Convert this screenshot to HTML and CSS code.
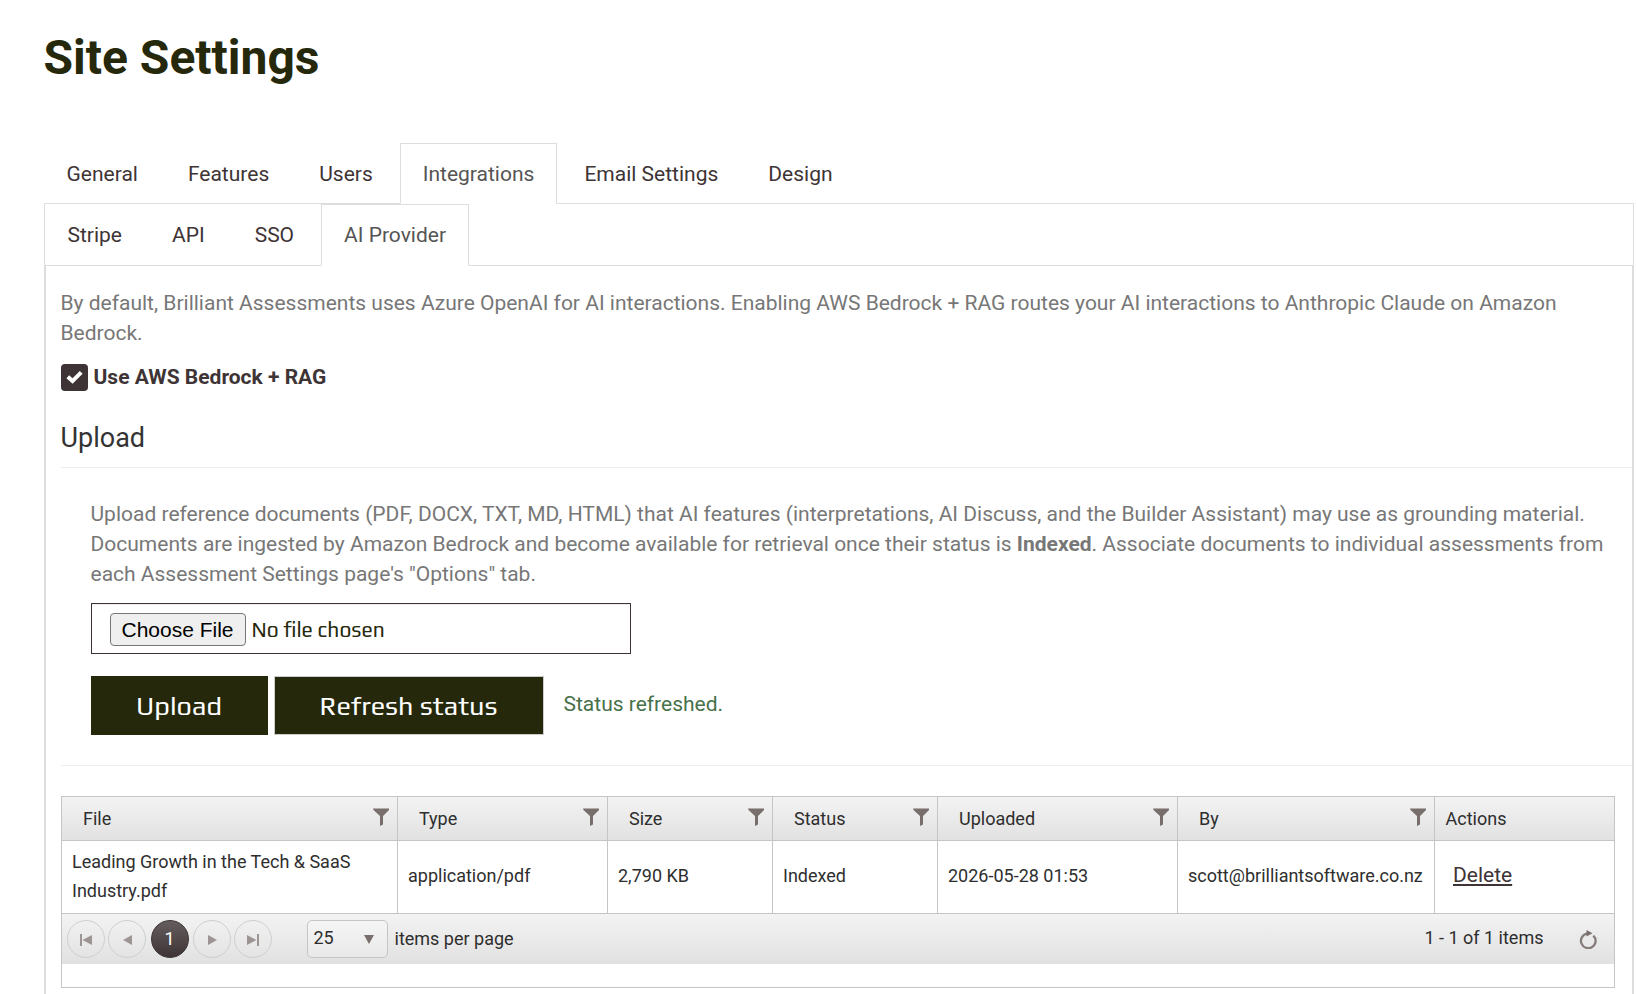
FILE: index.html
```html
<!DOCTYPE html>
<html lang="en">
<head>
    <meta charset="UTF-8">
    <meta name="viewport" content="width=device-width, initial-scale=1.0">
    <title>Site Settings</title>
    <link rel="stylesheet" href="styles.css">
</head>
<body>
    <!-- Shared icon shapes -->
    <svg class="sprite" width="0" height="0">
        <symbol id="filter" viewBox="0 0 16 18">
            <path d="M0 0.5h16v1.5L10 8v8.5l-3 1.5V8L0.5 2z"/>
        </symbol>
    </svg>

    <div class="page">
        <h1>Site Settings</h1>

        <ul class="tabs">
            <li><a>General</a></li>
            <li><a>Features</a></li>
            <li><a>Users</a></li>
            <li class="active"><a>Integrations</a></li>
            <li><a>Email Settings</a></li>
            <li><a>Design</a></li>
        </ul>

        <div class="tab-content">
            <ul class="tabs inner-tabs">
                <li><a>Stripe</a></li>
                <li><a>API</a></li>
                <li><a>SSO</a></li>
                <li class="active"><a>AI Provider</a></li>
            </ul>

            <div class="inner-content">
                <p class="help">By default, Brilliant Assessments uses Azure OpenAI for AI interactions. Enabling AWS Bedrock + RAG routes your AI interactions to Anthropic Claude on Amazon Bedrock.</p>

                <div class="check-row">
                    <span class="checkbox">
                        <svg width="17" height="14" viewBox="0 0 17 14"><path d="M1.8 6.8l4.7 4.3L15.2 2.3" fill="none" stroke="#fff" stroke-width="4"/></svg>
                    </span>
                    <label>Use AWS Bedrock + RAG</label>
                </div>

                <h3>Upload</h3>

                <div class="upload-area">
                    <p class="help">Upload reference documents (PDF, DOCX, TXT, MD, HTML) that AI features (interpretations, AI Discuss, and the Builder Assistant) may use as grounding material. Documents are ingested by Amazon Bedrock and become available for retrieval once their status is <strong>Indexed</strong>. Associate documents to individual assessments from each Assessment Settings page's "Options" tab.</p>
                    <div class="file-input">
                        <button class="choose">Choose File</button>
                        <span class="file-name">No file chosen</span>
                    </div>
                    <div class="actions">
                        <button class="btn">Upload</button>
                        <button class="btn btn-bordered">Refresh status</button>
                        <span class="status">Status refreshed.</span>
                    </div>
                </div>

                <div class="grid">
                    <table>
                        <colgroup>
                            <col class="col-file">
                            <col class="col-type">
                            <col class="col-size">
                            <col class="col-status">
                            <col class="col-uploaded">
                            <col class="col-by">
                            <col>
                        </colgroup>
                        <thead>
                            <tr>
                                <th><div class="head">File<svg class="filter"><use href="#filter"/></svg></div></th>
                                <th><div class="head">Type<svg class="filter"><use href="#filter"/></svg></div></th>
                                <th><div class="head">Size<svg class="filter"><use href="#filter"/></svg></div></th>
                                <th><div class="head">Status<svg class="filter"><use href="#filter"/></svg></div></th>
                                <th><div class="head">Uploaded<svg class="filter"><use href="#filter"/></svg></div></th>
                                <th><div class="head">By<svg class="filter"><use href="#filter"/></svg></div></th>
                                <th><div class="head plain">Actions</div></th>
                            </tr>
                        </thead>
                        <tbody>
                            <tr>
                                <td>Leading Growth in the Tech &amp; SaaS Industry.pdf</td>
                                <td>application/pdf</td>
                                <td>2,790 KB</td>
                                <td>Indexed</td>
                                <td>2026-05-28 01:53</td>
                                <td>scott@brilliantsoftware.co.nz</td>
                                <td><a class="delete">Delete</a></td>
                            </tr>
                        </tbody>
                    </table>

                    <div class="pager">
                        <span class="page-btn"><svg width="12" height="12" viewBox="0 0 12 12"><path d="M0 0h2v12H0zM12 1v10L2.5 6z"/></svg></span>
                        <span class="page-btn"><svg width="12" height="12" viewBox="0 0 12 12"><path d="M11 1v10L2 6z"/></svg></span>
                        <span class="page-btn current">1</span>
                        <span class="page-btn"><svg width="12" height="12" viewBox="0 0 12 12"><path d="M2 1v10l9-5z"/></svg></span>
                        <span class="page-btn"><svg width="12" height="12" viewBox="0 0 12 12"><path d="M10 0h2v12h-2zM0 1v10l9.5-5z"/></svg></span>
                        <span class="page-size">25<svg width="10" height="9" viewBox="0 0 10 9"><path d="M0 0h10L5 9z"/></svg></span>
                        <span class="page-label">items per page</span>
                        <span class="page-info">1 - 1 of 1 items</span>
                        <svg class="refresh" width="18" height="19" viewBox="0 0 18 19"><path d="M14.3 5.6A7.3 7.3 0 1 1 8 3.7" fill="none" stroke="#857c7a" stroke-width="2.3"/><path d="M7.5 0l6 3.2-6 3.3z" fill="#786e6b"/></svg>
                    </div>
                </div>
            </div>
        </div>
    </div>
</body>
</html>
```

FILE: styles.css
```css
* {
    box-sizing: border-box;
}
body {
    margin: 0;
    font-family: Roboto, "Liberation Sans", sans-serif;
    font-size: 21px;
    line-height: 30px;
    color: #333;
    background-color: #fff;
}
.sprite {
    position: absolute;
}
.page {
    display: flex;
    flex-direction: column;
    height: 994px;
    padding: 28px 3px 0 43.5px;
    overflow: hidden;
}
h1 {
    margin: 0 0 55px;
    font-size: 48px;
    line-height: 60px;
    font-weight: bold;
    color: #25280b;
}

/* Tabs */
.tabs {
    display: flex;
    gap: 4px;
    margin: 0;
    padding: 0;
    list-style: none;
    border-bottom: 1px solid #ddd;
}
.tabs li {
    height: 61px;
    margin-bottom: -1px;
    padding: 15px 22px;
    border: 1px solid transparent;
    color: #3e3435;
}
.tabs li.active {
    color: #555;
    background-color: #fff;
    border-color: #ddd #ddd #fff;
}
.tab-content {
    display: flex;
    flex-direction: column;
    flex: 1;
    border: solid #ddd;
    border-width: 0 1px;
}
.inner-tabs li {
    height: 62px;
}
.inner-content {
    flex: 1;
    padding: 21.5px 0 0 15px;
    border: solid #ddd;
    border-width: 0 1px;
}

.help {
    margin: 0;
    color: #777;
}
.check-row {
    display: flex;
    align-items: center;
    gap: 6px;
    height: 30px;
    margin-top: 14.5px;
    font-weight: bold;
    color: #3e3435;
}
.checkbox {
    display: flex;
    align-items: center;
    justify-content: center;
    width: 27px;
    height: 27px;
    border-radius: 4px;
    background-color: #3e3435;
}
h3 {
    margin: 29px 0 0;
    padding-bottom: 12px;
    font-size: 27px;
    line-height: 34px;
    font-weight: normal;
    border-bottom: 1px solid #eee;
}

/* Upload */
.upload-area {
    height: 298px;
    padding: 30.5px 20px 0 30px;
    border-bottom: 1px solid #eee;
}
.file-input {
    display: flex;
    align-items: center;
    gap: 6px;
    width: 540px;
    height: 51px;
    margin-top: 14.5px;
    padding: 2px 0 0 18px;
    border: 1px solid #3e3435;
    box-shadow: inset 0 1px 1px rgba(0, 0, 0, 0.075);
}
.choose {
    width: 136px;
    height: 33px;
    padding: 0;
    font-family: "Liberation Sans", Arial, sans-serif;
    font-size: 21px;
    color: #000;
    background-color: #efefef;
    border: 1px solid #767676;
    border-radius: 4px;
}
.file-name {
    font-family: Play, Roboto, sans-serif;
    color: #25280b;
}
.actions {
    display: flex;
    align-items: center;
    gap: 6px;
    margin-top: 22px;
}
.btn {
    width: 177px;
    height: 59px;
    padding: 0;
    font-family: Play, "Noto Sans", sans-serif;
    font-size: 27px;
    color: #fff;
    background-color: #25280b;
    border: none;
}
.btn-bordered {
    width: 270px;
    border: 1px solid #ccc;
}
.status {
    margin-left: 14px;
    padding-bottom: 4px;
    color: #46714a;
}

/* Grid */
.grid {
    width: 1554px;
    height: 192px;
    margin-top: 30px;
    font-size: 18px;
    line-height: 29px;
    border: 1px solid #c5c5c5;
    color: #2e2e2e;
}
table {
    width: 100%;
    table-layout: fixed;
    border-collapse: separate;
    border-spacing: 0;
}
.col-file { width: 336px; }
.col-type { width: 210px; }
.col-size { width: 165px; }
.col-status { width: 165px; }
.col-uploaded { width: 240px; }
.col-by { width: 257px; }
thead tr {
    background: linear-gradient(#f3f3f3, #e1e1e1);
}
th, td {
    border: solid #c5c5c5;
    border-width: 0 1px 1px 0;
    text-align: left;
    font-weight: normal;
}
th:last-child, td:last-child {
    border-right: none;
}
th {
    height: 44px;
    padding: 0;
}
td {
    height: 73px;
    padding: 0 10.5px 3px;
}
.head {
    display: flex;
    justify-content: space-between;
    align-items: center;
    padding: 0 8px 0 21.5px;
}
.head.plain {
    padding-left: 11px;
}
.filter {
    width: 16px;
    height: 18px;
    margin-top: -3px;
    fill: #786e6b;
}
.delete {
    margin-left: 8px;
    font-size: 21px;
    color: #3e3435;
    text-decoration: underline;
}

/* Pager */
.pager {
    display: flex;
    align-items: center;
    height: 50px;
    padding-left: 5px;
    background: linear-gradient(#f3f3f3, #e1e1e1);
}
.page-btn {
    display: flex;
    align-items: center;
    justify-content: center;
    width: 38px;
    height: 38px;
    margin-right: 3px;
    padding-top: 1px;
    border: 1px solid #cfcfcf;
    border-radius: 50%;
    fill: #9c9593;
}
.page-btn.current {
    margin: 0 4px 0 2px;
    padding: 0 0 1px;
    color: #fff;
    border-color: #3e3435;
    background: linear-gradient(#655d5d, #3e3435);
}
.page-size {
    display: flex;
    align-items: center;
    justify-content: space-between;
    width: 81px;
    height: 38px;
    margin-left: 32px;
    padding: 0 13px 3px 6px;
    border: 1px solid #c5c5c5;
    border-radius: 5px;
    background: linear-gradient(#f5f5f5, #e9e9e9);
    fill: #786e6b;
}
.page-size svg {
    margin-top: 4px;
}
.page-label {
    margin-left: 7px;
    padding-bottom: 1px;
}
.page-info {
    margin-left: auto;
    margin-right: 35px;
    padding-bottom: 3px;
}
.refresh {
    margin-right: 17px;
}
```
